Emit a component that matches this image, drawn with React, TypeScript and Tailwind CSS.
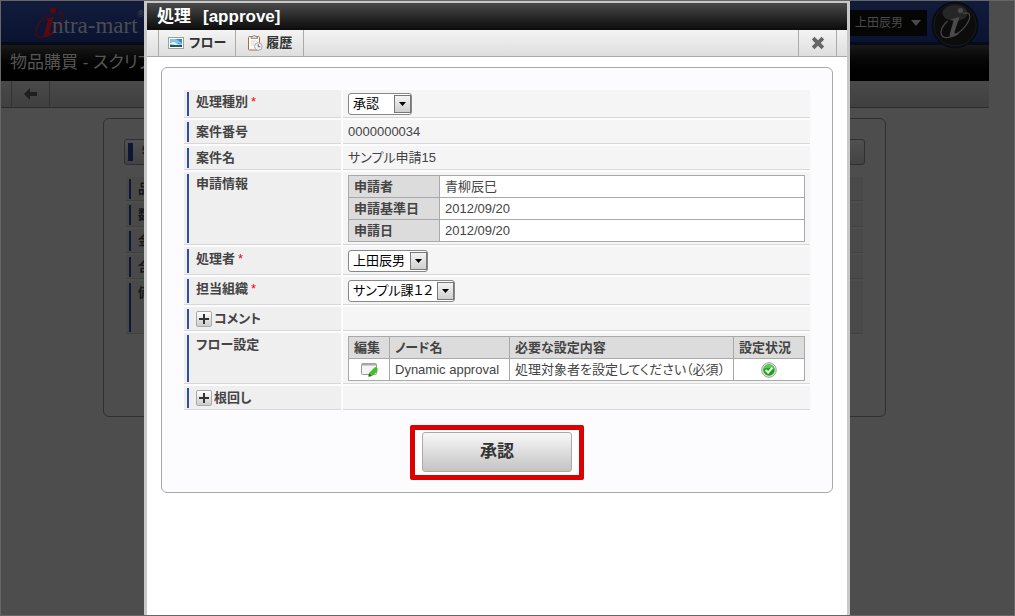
import { useId, useState } from 'react'
import type { ReactNode } from 'react'

const ORDER_ROWS = [
  { label: '品名', height: 'h-6' },
  { label: '数量', height: 'h-6' },
  { label: '金額', height: 'h-6' },
  { label: '合計', height: 'h-6' },
  { label: '備考', height: 'h-[53px]' },
]

const APPLICATION = [
  { label: '申請者', value: '青柳辰巳' },
  { label: '申請基準日', value: '2012/09/20' },
  { label: '申請日', value: '2012/09/20' },
]

function LogoMark() {
  return (
    <svg width="30" height="36" viewBox="0 0 30 36" fill="none" aria-hidden="true">
      <path d="M24 7.500C29 5 30 9 27 15.500 23 24 13 31.500 6 31 0 30 1 22 6.500 15.500 9 12.500 12 10 15 8.500" stroke="#4a0a14" strokeWidth="1.300" />
      <circle cx="19" cy="4.500" r="3" fill="#5a0910" />
      <path d="M11 13.500L20 10.500L15 26.500Q14.500 29 19 26.500L18.500 28Q11 33 9.500 29.500L13.800 14.500Z" fill="#5a0910" />
    </svg>
  )
}

function ProductBadge() {
  return (
    <svg width="48" height="48" viewBox="0 0 48 48" fill="none" aria-hidden="true">
      <circle cx="24" cy="24" r="23.500" fill="#070b18" />
      <circle cx="24" cy="24" r="21" fill="#0c0c0c" stroke="#1a1a1a" />
      <ellipse cx="24" cy="12" rx="12.500" ry="8" fill="#262626" />
      <path d="M32 12.500C40 10 40 16 36.500 22 32 30 21 37.500 14 36.500 7 35 10 26 16.500 20" stroke="#484848" strokeWidth="1.200" />
      <circle cx="29.500" cy="9.500" r="2.600" fill="#4a4a4a" />
      <path d="M19.500 18.500L28.500 16L23.500 31Q23 34 28 31.500L27 33.500Q19.500 38 18.500 34L22.500 19.500Z" fill="#4a4a4a" />
    </svg>
  )
}

function FlowIcon() {
  return (
    <svg width="16" height="16" viewBox="0 0 16 16" aria-hidden="true">
      <rect x="0.500" y="2.500" width="15" height="11" fill="#fff" stroke="#9aa0a6" />
      <rect x="2" y="4" width="12" height="8" fill="#2f86c8" />
      <path d="M2 4h6l6 4v1L2 7z" fill="#7fc3ee" />
      <path d="M2 8q3-2 6 0t6 1v1H2z" fill="#e9f6fb" />
      <path d="M2 9.500l6 0.500 6-0.300V12H2z" fill="#1b5c63" />
    </svg>
  )
}

function HistoryIcon() {
  return (
    <svg width="16" height="16" viewBox="0 0 16 16" fill="none" aria-hidden="true">
      <rect x="1.500" y="1.500" width="11" height="13.500" rx="1" fill="#fff" stroke="#b8673f" />
      <path d="M4 3.500V2h1.500l1-1.500h1.500l1 1.500h1.500v1.500z" fill="#ddd" stroke="#888" strokeWidth=".8" />
      <path d="M4 6h6M4 8h4M4 10h3" stroke="#d4d4d4" />
      <circle cx="11.300" cy="11.500" r="3.800" fill="#eef1f3" stroke="#a3a9ae" />
      <path d="M11.300 9.200v2.500h2" stroke="#666" />
    </svg>
  )
}

function EditIcon() {
  return (
    <svg width="17" height="16" viewBox="0 0 17 16" fill="none" aria-hidden="true">
      <rect x="0.500" y="1.500" width="15" height="11" rx="1" fill="#f4f4f4" stroke="#9a9a9a" />
      <path d="M1 2.500h14" stroke="#aaa" strokeWidth="2" />
      <path d="M14 5l2.500 1v3.500l-5.500 4.500-3.500.5.500-3.500z" fill="#43c02a" />
      <path d="M8 11.500l2.500 2.500-3 .7z" fill="#444" />
    </svg>
  )
}

function OkIcon() {
  return (
    <svg width="16" height="16" viewBox="0 0 16 16" fill="none" aria-label="設定済み">
      <circle cx="8" cy="8" r="7.300" fill="#e4e4e4" stroke="#a0a0a0" />
      <circle cx="8" cy="8" r="5.800" fill="#17a817" />
      <path d="M2.600 7a5.500 5.500 0 0 1 10.800 0Q8 4.500 2.600 7z" fill="#58cc55" />
      <path d="M4.700 8l2.400 2.600 4.300-5" stroke="#fff" strokeWidth="2" />
    </svg>
  )
}

function CloseIcon() {
  return (
    <svg width="14" height="14" viewBox="0 0 14 14" aria-hidden="true">
      <path d="M3.500.8L7 4.200 10.500.8l2.700 2.700L9.800 7l3.400 3.500-2.700 2.700L7 9.800l-3.500 3.400L.8 10.500 4.200 7 .8 3.500z" fill="#666" />
    </svg>
  )
}

function Select({ id, options, width }: { id: string; options: string[]; width: string }) {
  return (
    <div className={`relative ${width}`}>
      <select id={id} className="block h-[22px] w-full appearance-none rounded-[3px] border border-[#888] bg-white pl-1 text-[13px] leading-5 text-black">
        {options.map((o) => <option key={o}>{o}</option>)}
      </select>
      <span className="pointer-events-none absolute right-px top-[2px] flex h-[18px] w-[17px] items-center justify-center border border-[#777] bg-linear-to-b from-[#f4f4f4] to-[#cfcfcf]">
        <svg width="7" height="4" viewBox="0 0 7 4"><path d="M0 0h7L3.500 4z" fill="#000" /></svg>
      </span>
    </div>
  )
}

interface FieldProps {
  label: string
  htmlFor?: string
  required?: boolean
  expandable?: boolean
  children?: ReactNode
}

function Field({ label, htmlFor, required, expandable, children }: FieldProps) {
  const [open, setOpen] = useState(false)

  return (
    <>
      <div className="flex border-b border-[#d8d8d8] bg-[#efefef] pb-px pl-[3px] pt-[2px]">
        <div className="flex min-h-5 flex-1 items-start border-l-2 border-[#2f4f9f] pl-[7px] font-bold leading-5">
          {expandable && (
            <button type="button" aria-label={label} aria-expanded={open} onClick={() => setOpen(!open)}
              className="mr-[2px] mt-[2px] flex size-4 shrink-0 items-center justify-center rounded-[2px] border border-[#aaa] bg-linear-to-b from-white to-[#ccc]">
              <svg width="10" height="10" viewBox="0 0 10 10"><path d="M4 0h2v4h4v2H6v4H4V6H0V4h4z" fill="#333" /></svg>
            </button>
          )}
          {htmlFor ? <label htmlFor={htmlFor}>{label}</label> : <span>{label}</span>}
          {required && <span className="ml-[3px] font-normal text-[#f00]">*</span>}
        </div>
      </div>
      <div className="border-b border-[#d8d8d8] bg-[#f5f5f5] px-[5px] pb-[2px] pt-[3px] leading-[18px]">
        {children}
      </div>
    </>
  )
}

function OrderPage() {
  return (
    <div className="mr-[25px]">
      <header className="flex h-11 justify-between border-b-[3px] border-[#060b19] bg-linear-to-b from-[#121b3a] to-[#0a1330]">
        <div className="flex pl-[33px] pt-[5px]">
          <LogoMark />
          <span className="-ml-3 mt-[2px] font-['Liberation_Serif',serif] text-[23px] leading-9 text-[#4a4d55]">ntra-mart</span>
          <span className="mt-[2px] text-[9px] text-[#4a4d55]">®</span>
        </div>
        <div className="flex items-start pr-[10px]">
          <button type="button" className="mr-1 mt-[9px] flex h-[26px] items-center gap-2 bg-[#050505] px-[6px] text-xs text-[#4a4a4a]">
            上田辰男
            <svg width="10" height="6" viewBox="0 0 10 6"><path d="M0 0h10L5 6z" fill="#4a4a4a" /></svg>
          </button>
          <ProductBadge />
        </div>
      </header>
      <h1 className="h-9 overflow-hidden whitespace-nowrap bg-linear-to-b from-[#191919] to-black pl-[9px] text-[17px] leading-9 text-[#555]">
        物品購買 - スクリプト
      </h1>
      <nav className="flex h-[27px] border-b border-[#2d2d2d] bg-linear-to-b from-[#494949] to-[#404040] pl-[10px]">
        <button type="button" aria-label="戻る" className="flex w-[39px] items-center justify-center border-x border-[#333]">
          <svg width="13" height="12" viewBox="0 0 13 12"><path d="M0 6l6-6v4h7v4H6v4z" fill="#1f1f1f" /></svg>
        </button>
      </nav>
      <section className="ml-[102px] mr-[103px] mt-[10px] h-[299px] rounded-md border border-[#303030] px-5 pt-5">
        <h2 className="flex h-[26px] items-center rounded-[3px] border border-[#303030] bg-linear-to-b from-[#505050] to-[#434343] pl-[3px] text-[13px] font-bold text-[#161616]">
          <span className="mr-[9px] h-[18px] w-[5px] bg-[#0d1733]" />
          物品
        </h2>
        <div className="mx-[2px] mt-3 flex flex-col gap-[2px]">
          {ORDER_ROWS.map((row) => (
            <div key={row.label} className={`flex border-b border-[#414141] bg-[#494949] pb-px pl-[3px] pt-[2px] ${row.height}`}>
              <span className="border-l-2 border-[#0d1733] pl-[7px] text-[13px] font-bold leading-5 text-[#161616]">{row.label}</span>
            </div>
          ))}
        </div>
      </section>
    </div>
  )
}

function ApproveDialog() {
  const id = useId()

  return (
    <div role="dialog" aria-labelledby={`${id}-title`} className="w-full max-w-[706px] border-x-[3px] border-t-2 border-[#c8c8c8] bg-white text-[#444]">
      <h2 id={`${id}-title`} className="flex h-[27px] items-center gap-3 bg-linear-to-b from-[#4a4a4a] to-[#0c0c0c] pl-[10px] text-[17px] font-bold text-white">
        <span>処理</span>
        <span>[approve]</span>
      </h2>

      <div className="flex h-[27px] border-b border-[#aaa] bg-linear-to-b from-[#f4f4f4] to-[#dedede] pl-[11px] pr-[10px] font-bold text-[#333]">
        <button type="button" className="flex items-center gap-[5px] border-x border-[#aaa] px-[9px]">
          <FlowIcon />フロー
        </button>
        <button type="button" className="flex items-center gap-[3px] border-r border-[#aaa] px-[11px]">
          <HistoryIcon />履歴
        </button>
        <button type="button" aria-label="閉じる" className="ml-auto flex w-[39px] items-center justify-center border-x border-[#aaa]">
          <CloseIcon />
        </button>
      </div>

      <form onSubmit={(e) => e.preventDefault()} className="mx-[14px] mt-[10px] rounded-md border border-[#a9a9a9] bg-[#fcfcff] px-[22px] pb-3 pt-[22px]">
        <div className="grid grid-cols-[157px_1fr] gap-[2px]">
          <Field label="処理種別" htmlFor={`${id}-kind`} required>
            <Select id={`${id}-kind`} options={['承認', '否認', '差戻し']} width="w-16" />
          </Field>
          <Field label="案件番号">0000000034</Field>
          <Field label="案件名">サンプル申請15</Field>
          <Field label="申請情報">
            <table className="w-full border-collapse">
              <tbody>
                {APPLICATION.map((row) => (
                  <tr key={row.label} className="h-[22px]">
                    <th className="w-[91px] border border-[#a9a9a9] bg-[#dcdcdc] px-[5px] text-left">{row.label}</th>
                    <td className="border border-[#a9a9a9] bg-white px-[5px]">{row.value}</td>
                  </tr>
                ))}
              </tbody>
            </table>
          </Field>
          <Field label="処理者" htmlFor={`${id}-user`} required>
            <Select id={`${id}-user`} options={['上田辰男']} width="w-20" />
          </Field>
          <Field label="担当組織" htmlFor={`${id}-org`} required>
            <Select id={`${id}-org`} options={['サンプル課１２']} width="w-[107px]" />
          </Field>
          <Field label="コメント" expandable />
          <Field label="フロー設定">
            <table className="w-full table-fixed border-collapse">
              <thead>
                <tr className="h-[22px] bg-[#dcdcdc] text-left">
                  <th className="w-[41px] whitespace-nowrap border border-[#a9a9a9] px-[5px]">編集</th>
                  <th className="w-[120px] border border-[#a9a9a9] px-[5px]">ノード名</th>
                  <th className="border border-[#a9a9a9] px-[5px]">必要な設定内容</th>
                  <th className="w-[71px] whitespace-nowrap border border-[#a9a9a9] px-[5px]">設定状況</th>
                </tr>
              </thead>
              <tbody>
                <tr className="h-[22px] bg-white">
                  <td className="border border-[#a9a9a9]">
                    <button type="button" aria-label="編集" className="mx-auto block"><EditIcon /></button>
                  </td>
                  <td className="whitespace-nowrap border border-[#a9a9a9] px-[5px]">Dynamic approval</td>
                  <td className="whitespace-nowrap border border-[#a9a9a9] px-[5px]">処理対象者を設定してください（必須）</td>
                  <td className="border border-[#a9a9a9]">
                    <div className="flex justify-center"><OkIcon /></div>
                  </td>
                </tr>
              </tbody>
            </table>
          </Field>
          <Field label="根回し" expandable />
        </div>

        <div className="mx-auto mt-[15px] w-fit rounded-[2px] border-[5px] border-[#d00] bg-white px-[7px] pb-[3px] pt-[2px]">
          <button type="submit" className="block h-10 w-[150px] rounded-[3px] border border-[#a9a9a9] bg-linear-to-b from-[#f8f8f8] to-[#c4c4c4] text-[17px] font-bold text-[#333]">
            承認
          </button>
        </div>
      </form>
    </div>
  )
}

export default function App() {
  return (
    <div lang="ja" className="relative min-h-screen overflow-hidden border border-[#666] bg-[#4d4d4d] font-['Liberation_Sans','Noto_Sans_CJK_JP',sans-serif] text-[13px] [font-feature-settings:'palt']">
      <OrderPage />
      <div className="absolute inset-0 flex justify-center pr-[21px]">
        <ApproveDialog />
      </div>
    </div>
  )
}
